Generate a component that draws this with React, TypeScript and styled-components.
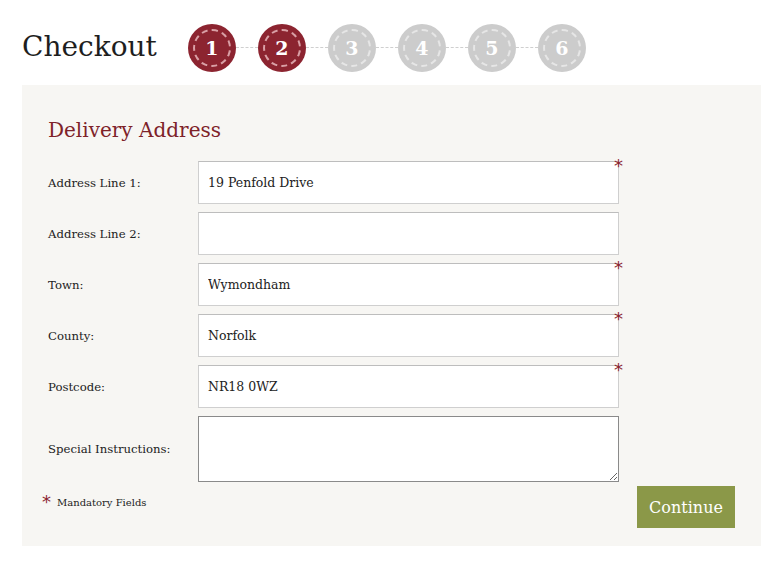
import React from "react";
import styled, { createGlobalStyle } from "styled-components";

const Global = createGlobalStyle`
  html, body { margin: 0; padding: 0; background: #ffffff; }
  body { font-family: "DejaVu Serif", "Liberation Serif", serif; color: #222; }
`;

const Page = styled.div`
  width: 773px;
  height: 566px;
  overflow: hidden;
`;

const Header = styled.header`
  display: flex;
  align-items: center;
  height: 85px;
  padding: 10px 0 0 22px;
  box-sizing: border-box;
`;

const Title = styled.h1`
  margin: 0 31px 0 0;
  font-family: "DejaVu Serif", serif;
  font-weight: normal;
  font-size: 28px;
  color: #1e1e1e;
  position: relative;
  top: -1px;
`;

const Steps = styled.div`
  display: flex;
  align-items: center;
`;

const Step = styled.div<{ $active: boolean }>`
  width: 48px;
  height: 48px;
  border-radius: 50%;
  background: ${(p) => (p.$active ? "#8c2430" : "#cccccc")};
  display: flex;
  align-items: center;
  justify-content: center;
  position: relative;
  &::before {
    content: "";
    position: absolute;
    inset: 5px;
    border-radius: 50%;
    border: 2px dashed ${(p) => (p.$active ? "#d9a0a6" : "#e6e6e6")};
  }
`;

const StepNum = styled.span`
  font-family: "DejaVu Serif", serif;
  font-weight: bold;
  font-size: 19px;
  color: #ffffff;
  position: relative;
`;

const Connector = styled.div`
  width: 22px;
  height: 0;
  border-top: 1px dashed #cfcfcf;
`;

const Panel = styled.section`
  margin-left: 22px;
  width: 739px;
  height: 461px;
  box-sizing: border-box;
  background: #f7f6f3;
  padding: 32px 26px 0 26px;
`;

const Heading = styled.h2`
  margin: 0 0 26px 0;
  font-family: "DejaVu Serif", serif;
  font-weight: normal;
  font-size: 20px;
  color: #7e2229;
  height: 18px;
  line-height: 26px;
`;

const Form = styled.div`
  display: grid;
  grid-template-columns: 150px 421px;
  row-gap: 8px;
  align-items: center;
`;

const Label = styled.label`
  font-family: "DejaVu Serif", serif;
  font-size: 11.7px;
  color: #222;
`;

const FieldWrap = styled.div`
  position: relative;
`;

const Input = styled.input`
  display: block;
  width: 421px;
  height: 43px;
  box-sizing: border-box;
  border: 1px solid #cfcfcf;
  border-top-color: #bdbdbd;
  background: #ffffff;
  padding: 0 9px;
  font-family: "DejaVu Serif", serif;
  font-size: 12.5px;
  color: #222;
  outline: none;
`;

const TextArea = styled.textarea`
  display: block;
  width: 421px;
  height: 66px;
  box-sizing: border-box;
  border: 1px solid #8a8a8a;
  background: #ffffff;
  margin: 0;
  resize: both;
  outline: none;
`;

const Star = styled.span`
  position: absolute;
  right: -4px;
  top: -4px;
  font-family: "DejaVu Sans", sans-serif;
  font-size: 18px;
  line-height: 18px;
  color: #8c2430;
`;

const Footer = styled.div`
  display: flex;
  justify-content: space-between;
  align-items: flex-start;
  margin-top: 4px;
  width: 687px;
`;

const Mandatory = styled.div`
  display: flex;
  align-items: center;
  gap: 6px;
  margin-left: -6px;
  margin-top: 9px;
  font-family: "DejaVu Serif", serif;
  font-size: 10px;
  color: #222;
`;

const MandStar = styled.span`
  font-family: "DejaVu Sans", sans-serif;
  font-size: 18px;
  line-height: 14px;
  color: #8c2430;
`;

const Button = styled.button`
  width: 98px;
  height: 42px;
  border: none;
  background: #8b9848;
  color: #ffffff;
  font-family: "DejaVu Serif", serif;
  font-size: 16px;
  cursor: pointer;
`;

type Field = { label: string; value: string; required: boolean };

const fields: Field[] = [
  { label: "Address Line 1:", value: "19 Penfold Drive", required: true },
  { label: "Address Line 2:", value: "", required: false },
  { label: "Town:", value: "Wymondham", required: true },
  { label: "County:", value: "Norfolk", required: true },
  { label: "Postcode:", value: "NR18 0WZ", required: true },
];

export default function App() {
  return (
    <Page>
      <Global />
      <Header>
        <Title>Checkout</Title>
        <Steps>
          {[1, 2, 3, 4, 5, 6].map((n, i) => (
            <React.Fragment key={n}>
              {i > 0 && <Connector />}
              <Step $active={n <= 2}>
                <StepNum>{n}</StepNum>
              </Step>
            </React.Fragment>
          ))}
        </Steps>
      </Header>
      <Panel>
        <Heading>Delivery Address</Heading>
        <Form>
          {fields.map((f) => (
            <React.Fragment key={f.label}>
              <Label>{f.label}</Label>
              <FieldWrap>
                <Input defaultValue={f.value} />
                {f.required && <Star>*</Star>}
              </FieldWrap>
            </React.Fragment>
          ))}
          <Label>Special Instructions:</Label>
          <FieldWrap>
            <TextArea />
          </FieldWrap>
        </Form>
        <Footer>
          <Mandatory>
            <MandStar>*</MandStar>
            <span>Mandatory Fields</span>
          </Mandatory>
          <Button>Continue</Button>
        </Footer>
      </Panel>
    </Page>
  );
}
